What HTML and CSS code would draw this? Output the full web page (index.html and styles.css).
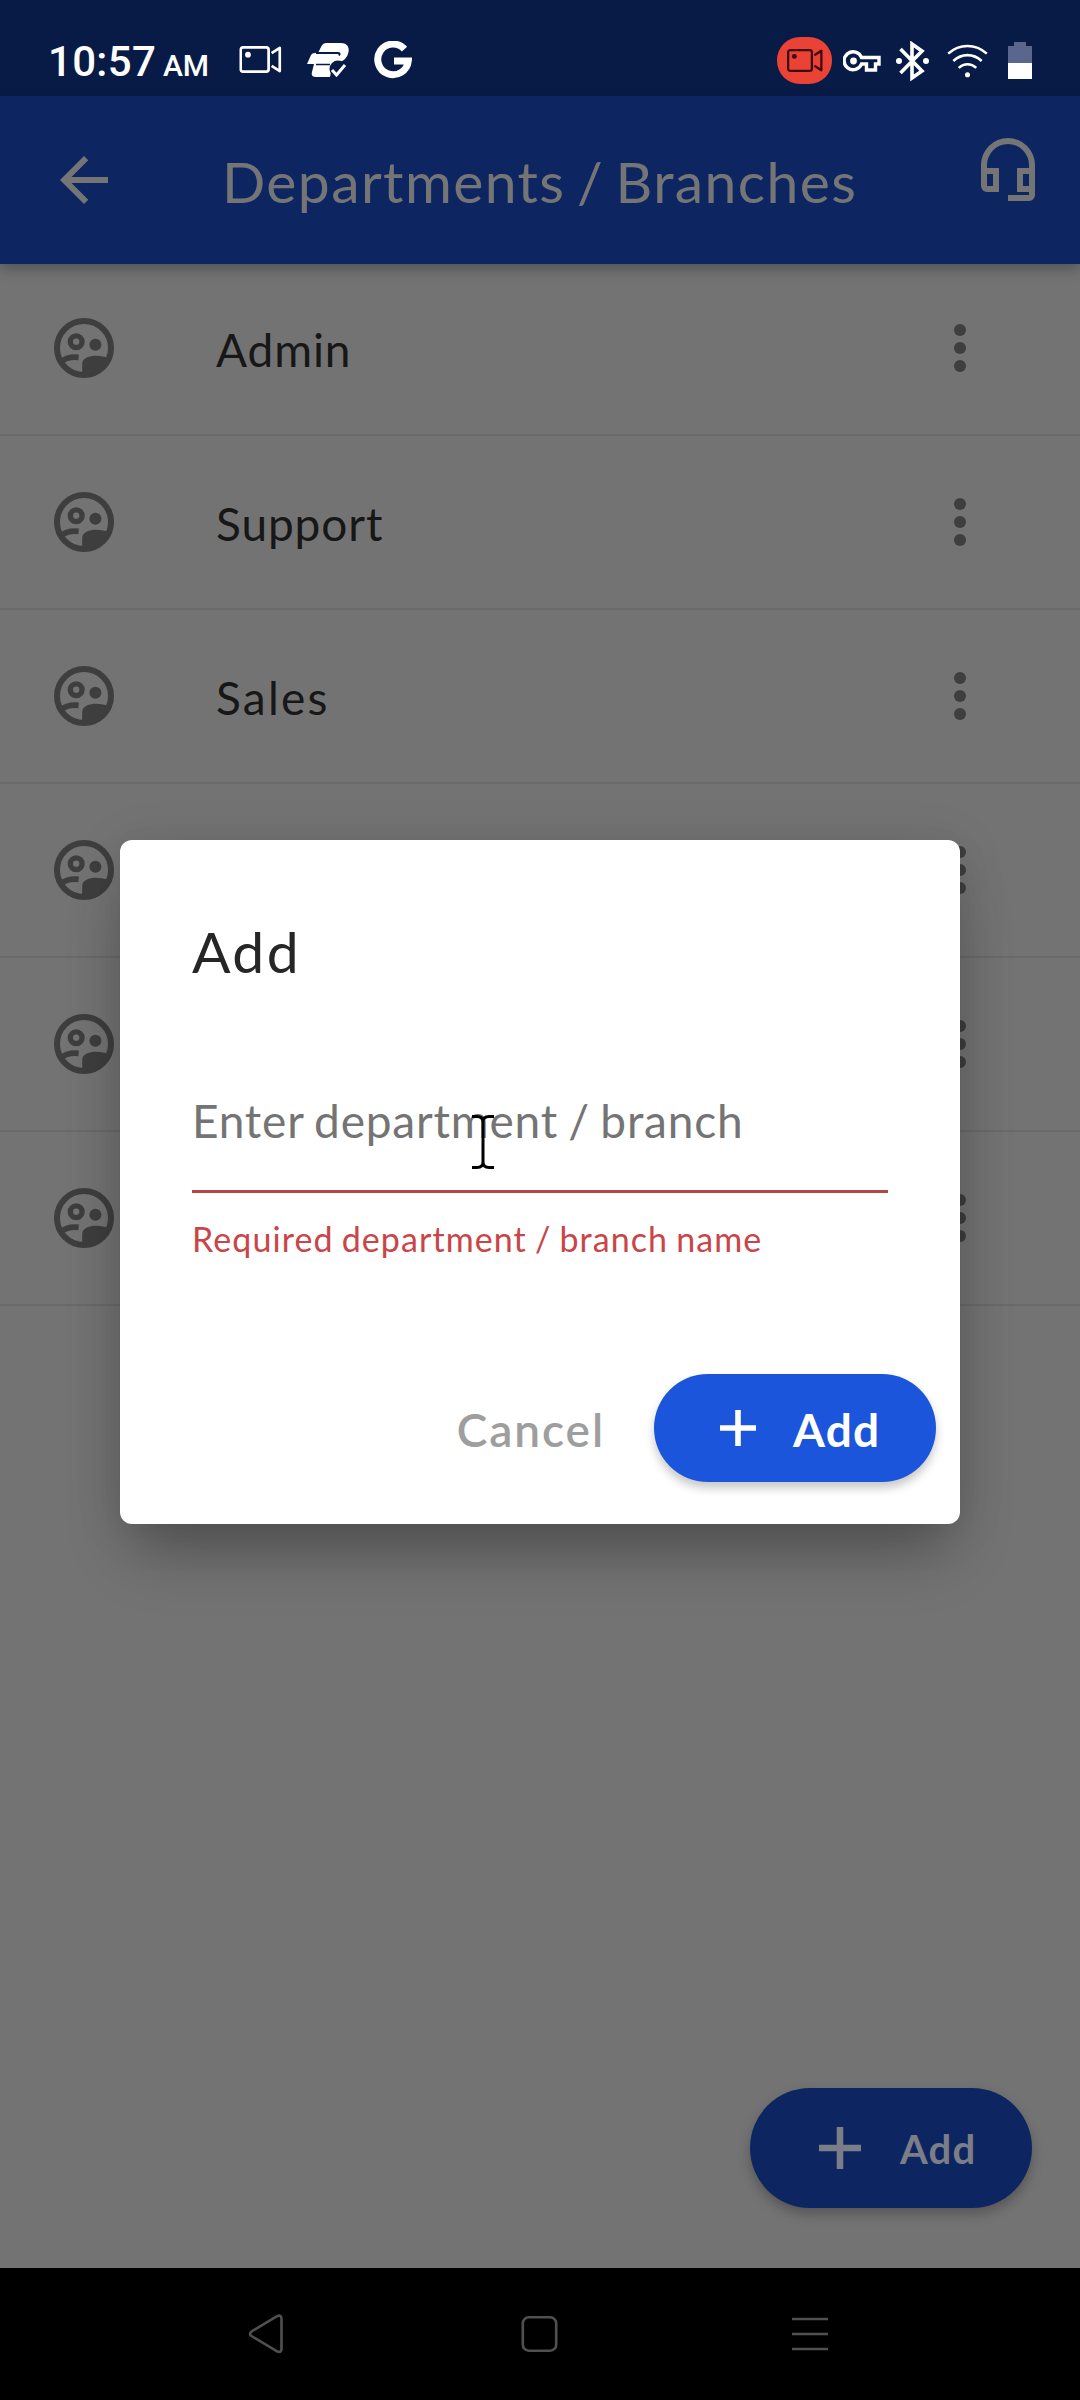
FILE: index.html
```
<!DOCTYPE html>
<html lang="en">
<head>
<meta charset="utf-8">
<title>Departments / Branches</title>
<link rel="stylesheet" href="styles.css">
</head>
<body>
<svg class="defs" width="0" height="0" aria-hidden="true">
  <symbol id="group" viewBox="0 0 24 24">
    <circle cx="12" cy="12" r="9" fill="none" stroke="currentColor" stroke-width="2"/>
    <circle cx="9.4" cy="9.9" r="1.95" fill="none" stroke="currentColor" stroke-width="1.8"/>
    <circle cx="15.8" cy="10.900" r="2" fill="currentColor"/>
    <path d="M4.200 16.700C5.600 15.400 7.800 14.900 10.200 15.100" fill="none" stroke="currentColor" stroke-width="1.9"/>
    <path d="M11.4 20.900v-3.600c0-2 2.600-2.700 4.500-2.700 1.600 0 3.400.3 4.500.9-1 3.500-4.700 5.600-9 5.400z" fill="currentColor"/>
  </symbol>
  <symbol id="more" viewBox="0 0 24 24">
    <circle cx="12" cy="6" r="2" fill="currentColor"/><circle cx="12" cy="12" r="2" fill="currentColor"/><circle cx="12" cy="18" r="2" fill="currentColor"/>
  </symbol>
  <symbol id="plus" viewBox="0 0 36 36"><path d="M18 0v36M0 18h36" fill="none" stroke="currentColor" stroke-width="5.600"/></symbol>
  <symbol id="camera" viewBox="0 0 44 28">
    <rect x="1.400" y="1.400" width="29" height="25.200" rx="2.500" fill="none" stroke="currentColor" stroke-width="2.800"/>
    <circle cx="9" cy="9" r="3" fill="currentColor"/>
    <path d="M33.500 7.500l8.500-5.500v24l-8.500-5.500" fill="none" stroke="currentColor" stroke-width="2.800" stroke-linejoin="round"/>
  </symbol>
</svg>
<div class="screen">
  <header class="status">
    <div class="status-left">
      <div class="clock"><span>10:57</span><small>AM</small></div>
      <svg class="s-cam" viewBox="0 0 44 28"><use href="#camera"/></svg>
      <svg class="s-vpn" viewBox="0 0 42 34">
        <path fill="#fff" d="M11.500 9l3-6q1.500-3 5-3H34c6 0 8.500 4 7.500 9-1 5-4 9-9.500 10l-7 5-2 10H9c-3.500 0-5-2-4-5l2-8H0l4-9q1-2 4-2z"/>
        <path d="M9 10h22q2.500 0 1 2.500" fill="none" stroke="#081b47" stroke-width="2"/>
        <path d="M9 21.500h14" fill="none" stroke="#081b47" stroke-width="1.500"/>
        <circle cx="31" cy="26" r="8.500" fill="#081b47"/>
        <path d="M25 27l4.500 5L38 22" fill="none" stroke="#fff" stroke-width="3"/>
      </svg>
      <svg class="s-g" viewBox="0 0 38 38"><path d="M30.500 8.200A15.300 15.300 0 1 0 34.300 20H20" fill="none" stroke="#fff" stroke-width="7"/></svg>
    </div>
    <div class="status-right">
      <span class="rec"><svg viewBox="0 0 44 28"><use href="#camera"/></svg></span>
      <svg class="s-key" viewBox="0 0 38 24"><path d="M18.500 8.500A9 9 0 1 0 18.500 15h5v6h9v-6H36V8.500z" fill="none" stroke="#fff" stroke-width="3.400"/><circle cx="10.500" cy="12" r="3.400" fill="#fff"/></svg>
      <svg class="s-bt" viewBox="0 0 34 40"><path d="M4.500 8L26 30 16 37V3l10 7L4.500 32" fill="none" stroke="#fff" stroke-width="3.600"/><circle cx="3" cy="20" r="3" fill="#fff"/><circle cx="30" cy="20" r="3" fill="#fff"/></svg>
      <svg class="s-wifi" viewBox="0 0 42 34"><g fill="none" stroke="#fff" stroke-width="2.600"><path d="M1.200 9.500c11.500-10.500 28-10.500 39.600 0M6.500 17c8.500-8 20.500-8 29 0M12 24c5.500-5 12.500-5 18 0"/></g><circle cx="21" cy="31" r="2.600" fill="#fff"/></svg>
      <svg class="s-batt" viewBox="0 0 24 37"><path d="M6 0h12v4h6v17H0V4h6z" fill="#5a668c"/><path d="M0 21h24v16H0z" fill="#fff"/></svg>
    </div>
  </header>
  <div class="appbar">
    <svg class="back" viewBox="0 0 24 24"><path fill="currentColor" d="M20 11H7.830l5.590-5.590L12 4l-8 8 8 8 1.410-1.410L7.830 13H20v-2z"/></svg>
    <h1 class="title">Departments / Branches</h1>
    <svg class="headset" viewBox="0 0 24 24"><path fill="currentColor" fill-rule="evenodd" d="M12 1a9 9 0 0 0-9 9v7a2 2 0 0 0 2 2h4v-8H5v-1a7 7 0 0 1 14 0v1h-4v8h4v1h-7v2h7a2 2 0 0 0 2-2V10a9 9 0 0 0-9-9zM7 13v4H5v-4zm12 4h-2v-4h2z"/></svg>
  </div>
  <main class="content">
    <ul class="list">
      <li class="row"><svg class="ic"><use href="#group"/></svg><span class="name">Admin</span><svg class="ic"><use href="#more"/></svg></li>
      <li class="row"><svg class="ic"><use href="#group"/></svg><span class="name">Support</span><svg class="ic"><use href="#more"/></svg></li>
      <li class="row"><svg class="ic"><use href="#group"/></svg><span class="name sales">Sales</span><svg class="ic"><use href="#more"/></svg></li>
      <li class="row"><svg class="ic"><use href="#group"/></svg><span class="name"></span><svg class="ic"><use href="#more"/></svg></li>
      <li class="row"><svg class="ic"><use href="#group"/></svg><span class="name"></span><svg class="ic"><use href="#more"/></svg></li>
      <li class="row"><svg class="ic"><use href="#group"/></svg><span class="name"></span><svg class="ic"><use href="#more"/></svg></li>
    </ul>
    <div class="fab"><svg class="fab-plus"><use href="#plus"/></svg><span class="fab-label">Add</span></div>
  </main>
  <nav class="nav">
    <svg viewBox="0 0 42 42"><path d="M35.500 6v30q0 4-4 2.500L5.500 23q-3-2 0-4.500L31.500 3q4-1.500 4 3z"/></svg>
    <svg viewBox="0 0 42 42"><rect x="4.800" y="4.300" width="33.400" height="33.400" rx="6"/></svg>
    <svg viewBox="0 0 42 42"><path d="M3 6h36M3 21h36M3 36h36"/></svg>
  </nav>
  <section class="dialog">
    <h2 class="dlg-title">Add</h2>
    <div class="field">
      <span class="hint">Enter department / branch</span>
      <svg class="ibeam" viewBox="0 0 22 54"><path d="M0 1.500h5q6 0 6 5.500 0-5.500 6-5.500h5M0 52.500h5q6 0 6-5.500 0 5.500 6 5.500h5M11 5v44" fill="none" stroke="#000" stroke-width="3"/></svg>
    </div>
    <p class="error">Required department / branch name</p>
    <div class="actions">
      <span class="cancel">Cancel</span>
      <span class="add"><svg class="add-plus"><use href="#plus"/></svg><span class="add-label">Add</span></span>
    </div>
  </section>
</div>
</body>
</html>
```
FILE: styles.css
```
* { box-sizing: border-box; }
body { margin: 0; font-family: Lato, "Open Sans", sans-serif; }
svg { display: block; flex: none; }
h1, h2, p, ul { margin: 0; padding: 0; font-weight: 400; }
.defs { position: absolute; }
.screen { position: relative; width: 1080px; height: 2400px; display: flex; flex-direction: column; background: #737373; overflow: hidden; white-space: nowrap; }

.status { height: 96px; background: #081b47; color: #fff; display: flex; justify-content: space-between; padding: 0 48px 0 48px; flex: none; }
.status-left, .status-right { display: flex; align-items: center; }
.clock { display: flex; align-items: baseline; gap: 7px; font: 500 42px/50px Roboto, sans-serif; padding-top: 31px; width: 191px; letter-spacing: .3px; }
.clock small { font-size: 30px; letter-spacing: -.3px; }
.s-cam { width: 43px; height: 27px; margin-top: 23px; }
.s-vpn { width: 42px; height: 34px; margin: 24px 0 0 25px; }
.s-g { width: 38px; height: 38px; margin: 24px 0 0 25px; }
.rec { width: 55px; height: 47px; border-radius: 23px; background: #ea4335; color: #3d0b12; display: flex; align-items: center; justify-content: center; margin-top: 25px; }
.rec svg { width: 36px; height: 23px; }
.s-key { width: 38px; height: 24px; margin: 25px 0 0 11px; }
.s-bt { width: 34px; height: 40px; margin: 25px 0 0 15px; }
.s-wifi { width: 41px; height: 34px; margin: 25px 0 0 17px; }
.s-batt { width: 24px; height: 37px; margin: 25px 0 0 20px; }

.appbar { height: 168px; flex: none; background: #0d2662; color: #757575; display: flex; align-items: center; padding: 0 36px 0 48px; box-shadow: 0 6px 12px rgba(0, 0, 0, .25); z-index: 1; }
.back, .headset { width: 72px; height: 72px; }
.headset { margin: -18px 0 0 auto; }
.title { font-size: 57px; line-height: 80px; letter-spacing: 1.400px; word-spacing: -4.500px; margin-left: 102px; padding-top: 2px; }

.content { flex: 1; display: flex; flex-direction: column; justify-content: space-between; align-items: flex-end; padding: 0 48px 60px 0; }
.list { list-style: none; width: 1080px; margin: -2px -48px 0 0; }
.row { height: 174px; display: flex; align-items: center; padding: 0 84px 0 48px; border-bottom: 2px solid #6a6a6a; color: #3e3e3e; }
.ic { width: 72px; height: 72px; }
.name { flex: 1; margin-left: 96px; font-size: 46px; line-height: 60px; letter-spacing: .9px; padding-top: 4px; color: #171717; }
.sales { letter-spacing: 2.200px; }
.fab { width: 282px; height: 120px; border-radius: 60px; background: #0d2662; color: #7b7e86; display: flex; align-items: center; padding-left: 69px; box-shadow: 0 6px 12px rgba(0, 0, 0, .25); }
.fab-plus { width: 42px; height: 42px; }
.fab-label { font-size: 40px; font-weight: 700; letter-spacing: 1.200px; margin-left: 39px; padding-top: 1px; }

.nav { height: 132px; flex: none; background: #000; display: flex; align-items: center; justify-content: space-between; padding: 0 249px 0 246px; }
.nav svg { width: 42px; height: 42px; fill: none; stroke: #505050; stroke-width: 2.6px; }

.dialog { position: absolute; left: 120px; top: 840px; width: 840px; height: 684px; padding: 76px 24px 42px 72px; background: #fff; border-radius: 12px; box-shadow: 0 38px 60px -14px rgba(0, 0, 0, .3), 0 4px 50px rgba(0, 0, 0, .1); display: flex; flex-direction: column; }
.dlg-title { font-size: 57px; line-height: 70px; letter-spacing: 2.400px; color: #262626; }
.field { position: relative; width: 696px; height: 207px; padding-top: 105px; border-bottom: 3px solid #b54743; }
.hint { display: block; font-size: 46px; line-height: 60px; letter-spacing: .8px; word-spacing: -2.200px; color: #747474; }
.ibeam { position: absolute; left: 280px; top: 129px; width: 22px; height: 54px; }
.error { font-size: 34px; line-height: 40px; letter-spacing: 1.080px; word-spacing: -1.700px; margin-top: 26px; color: #c94548; }
.actions { display: flex; justify-content: flex-end; align-items: center; margin-top: auto; }
.cancel { font-size: 46px; font-weight: 600; letter-spacing: 1.900px; color: #9e9e9e; margin-right: 49px; padding-top: 3px; }
.add { width: 282px; height: 108px; border-radius: 54px; background: #1b55db; color: #fff; display: flex; align-items: center; padding-left: 66px; box-shadow: 0 6px 10px rgba(0, 0, 0, .22); }
.add-plus { width: 36px; height: 36px; }
.add-label { font-size: 46px; font-weight: 700; letter-spacing: 1.200px; margin-left: 37px; padding-top: 3px; }
```
